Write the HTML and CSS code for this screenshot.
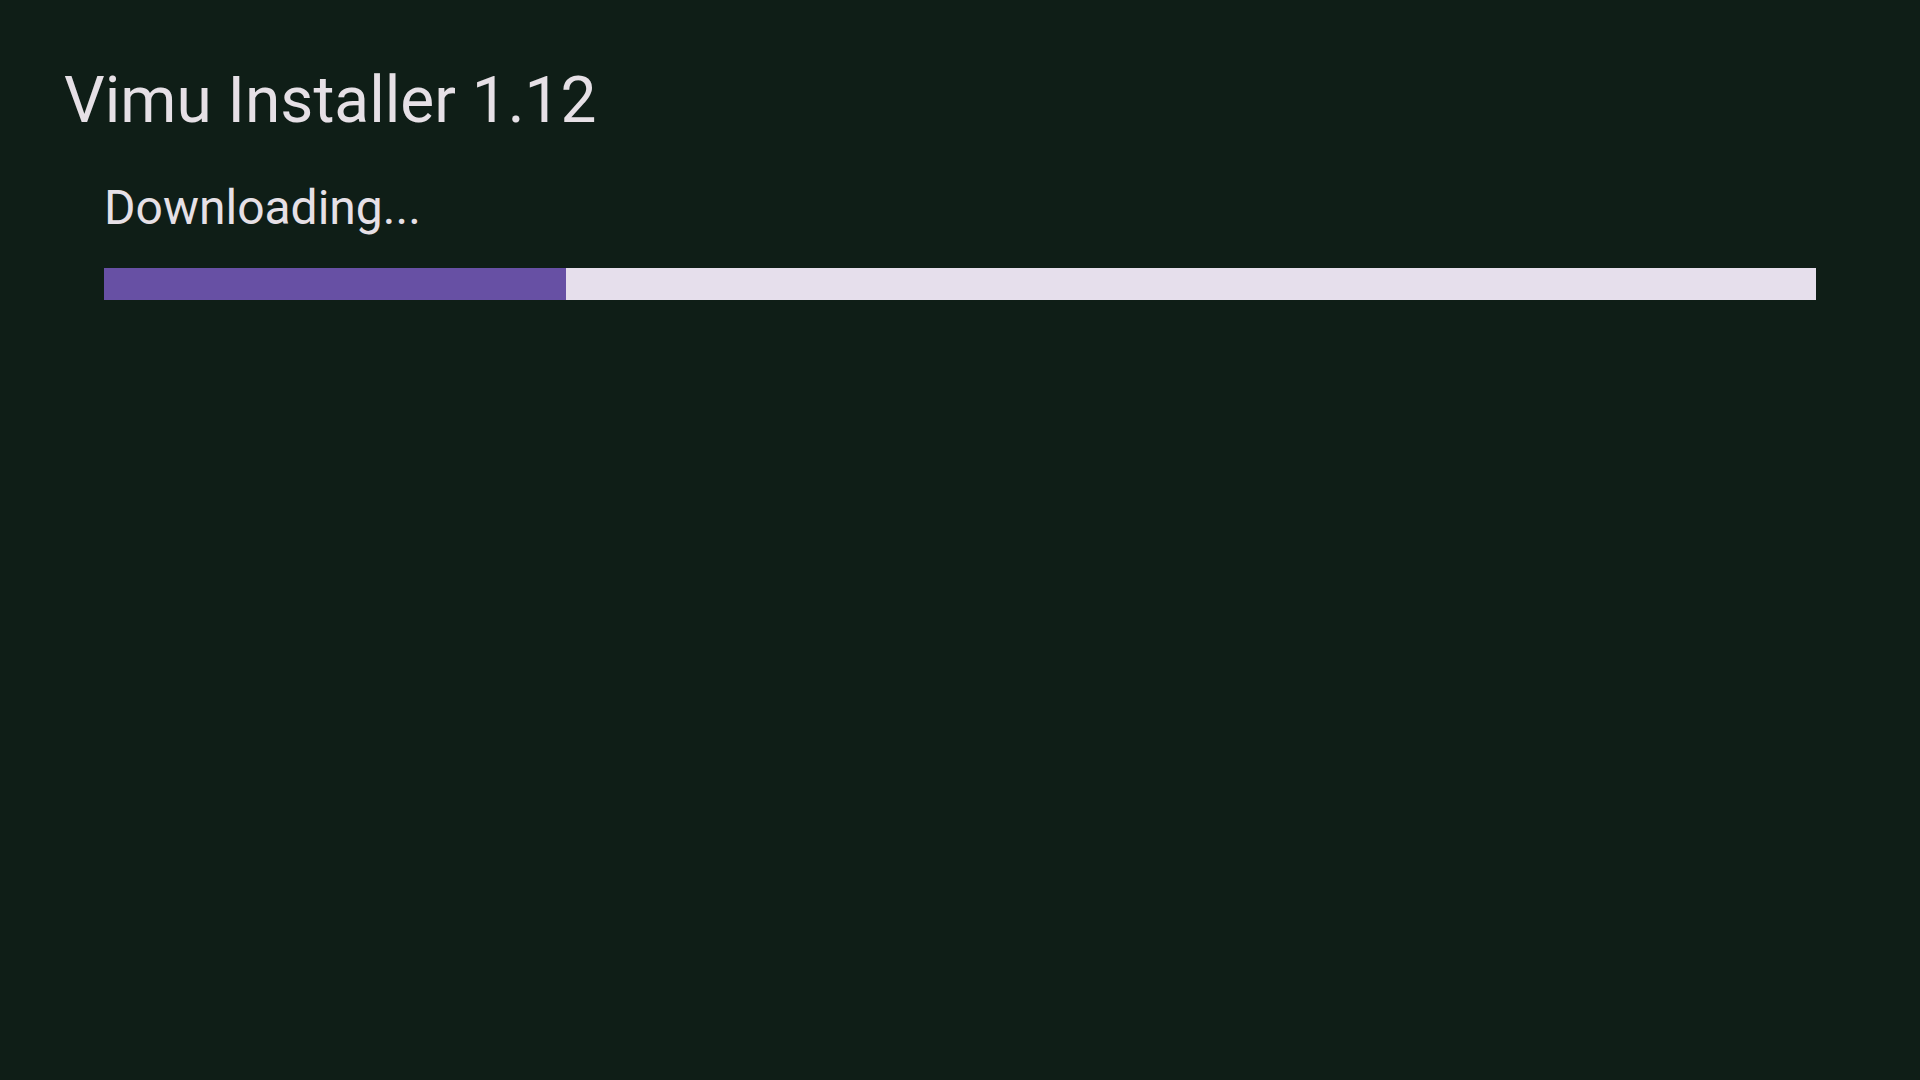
FILE: index.html
```html
<!DOCTYPE html>
<html>

<head>
    <title>Vimu Installer</title>
    <meta charset="UTF-8">
    <link rel="stylesheet" href="styles.css">
</head>

<body>
    <h1 class="title">Vimu Installer 1.12</h1>

    <div class="progress-section">
        <p class="status">Downloading...</p>
        <div class="progress">
            <div class="progress-fill" style="width: 26.99%"></div>
        </div>
    </div>
</body>

</html>
```

FILE: styles.css
```css
* {
    margin: 0;
    padding: 0;
    box-sizing: border-box;
}

html,
body {
    height: 100%;
}

body {
    font-family: Roboto, "Noto Sans", "Liberation Sans", sans-serif;
    color: #e6e0e6;
    background: #0f1e17;
    padding: 63px 64px;
}

.title {
    font-size: 64px;
    font-weight: 400;
    line-height: normal;
}

.progress-section {
    margin-top: 41px;
    padding: 0 40px;
}

.status {
    font-size: 48px;
    line-height: normal;
}

.progress {
    margin-top: 32px;
    height: 32px;
    background: #e6dfec;
    display: flex;
}

.progress-fill {
    height: 100%;
    background: #6750a4;
}
```
